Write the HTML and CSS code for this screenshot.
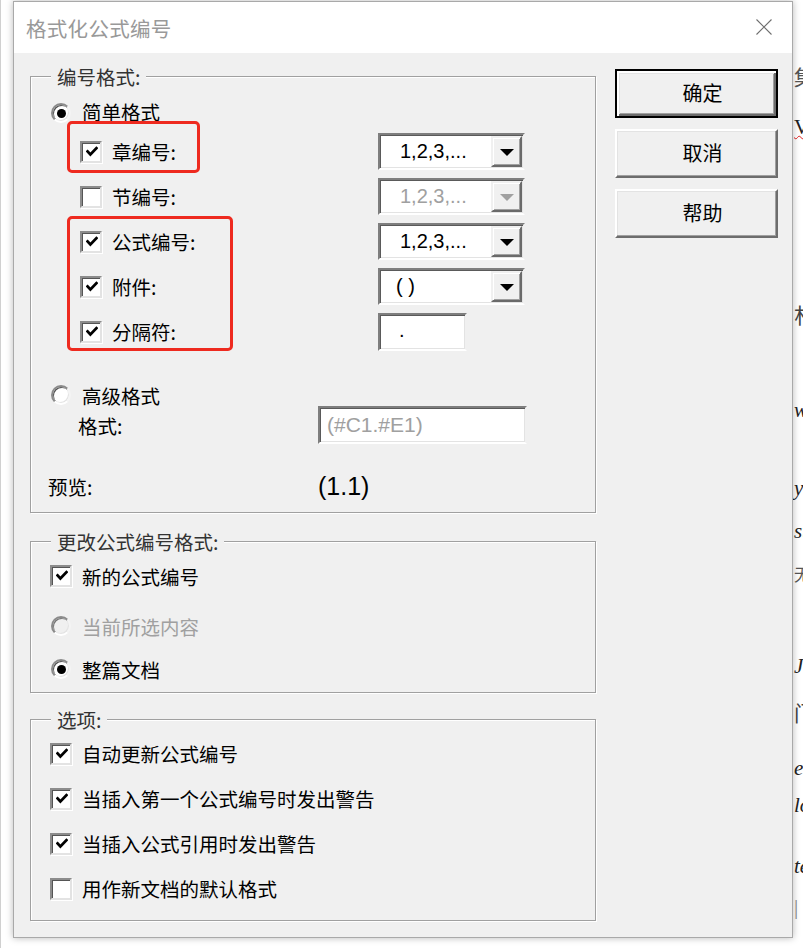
FILE: index.html
```html
<!DOCTYPE html>
<html lang="zh-CN">
<head>
<meta charset="utf-8">
<title>格式化公式编号</title>
<link rel="stylesheet" href="styles.css">
</head>
<body>
<div class="screen">
  <div class="left-strip"></div>
  <div class="dialog">
    <div class="titlebar">
      <span class="title">格式化公式编号</span>
      <svg class="close" width="16" height="16" viewBox="0 0 16 16"><path d="M0.5 0.5 L15.5 15.5 M15.5 0.5 L0.5 15.5" stroke="#6e6e6e" stroke-width="1.1" fill="none"/></svg>
    </div>
    <div class="body">
      <div class="groups">
        <div class="group g1">
          <span class="legend">编号格式:</span>
          <div class="row r-simple">
            <span class="mark"><span class="radio on"></span></span>
            <span class="label">简单格式</span>
          </div>
          <div class="row crow">
            <span class="check on"><svg viewBox="0 0 12 12"><path d="M1.6 5.4 L4.4 8.4 L10.4 2.2" stroke="#000" stroke-width="2.8" fill="none" stroke-linecap="square"/></svg></span>
            <span class="label clabel">章编号:</span>
            <span class="combo"><span class="ctext">1,2,3,...</span><span class="cbtn"><span class="arrow"></span></span></span>
          </div>
          <div class="row crow">
            <span class="check"></span>
            <span class="label clabel">节编号:</span>
            <span class="combo disabled"><span class="ctext">1,2,3,...</span><span class="cbtn"><span class="arrow"></span></span></span>
          </div>
          <div class="row crow">
            <span class="check on"><svg viewBox="0 0 12 12"><path d="M1.6 5.4 L4.4 8.4 L10.4 2.2" stroke="#000" stroke-width="2.8" fill="none" stroke-linecap="square"/></svg></span>
            <span class="label clabel">公式编号:</span>
            <span class="combo"><span class="ctext">1,2,3,...</span><span class="cbtn"><span class="arrow"></span></span></span>
          </div>
          <div class="row crow">
            <span class="check on"><svg viewBox="0 0 12 12"><path d="M1.6 5.4 L4.4 8.4 L10.4 2.2" stroke="#000" stroke-width="2.8" fill="none" stroke-linecap="square"/></svg></span>
            <span class="label clabel">附件:</span>
            <span class="combo"><span class="ctext paren">( )</span><span class="cbtn"><span class="arrow"></span></span></span>
          </div>
          <div class="row crow">
            <span class="check on"><svg viewBox="0 0 12 12"><path d="M1.6 5.4 L4.4 8.4 L10.4 2.2" stroke="#000" stroke-width="2.8" fill="none" stroke-linecap="square"/></svg></span>
            <span class="label clabel">分隔符:</span>
            <span class="field sep">.</span>
          </div>
          <div class="row r-adv">
            <span class="mark"><span class="radio"></span></span>
            <span class="label">高级格式</span>
          </div>
          <div class="row r-fmt">
            <span class="label fmt-label">格式:</span>
            <span class="field adv">(#C1.#E1)</span>
          </div>
          <div class="row r-preview">
            <span class="label pv-label">预览:</span>
            <span class="preview">(1.1)</span>
          </div>
          <span class="redbox rb1"></span>
          <span class="redbox rb2"></span>
        </div>

        <div class="group g2">
          <span class="legend">更改公式编号格式:</span>
          <div class="row r2a">
            <span class="check on"><svg viewBox="0 0 12 12"><path d="M1.6 5.4 L4.4 8.4 L10.4 2.2" stroke="#000" stroke-width="2.8" fill="none" stroke-linecap="square"/></svg></span>
            <span class="label">新的公式编号</span>
          </div>
          <div class="row r2b">
            <span class="mark"><span class="radio dis"></span></span>
            <span class="label gray">当前所选内容</span>
          </div>
          <div class="row r2c">
            <span class="mark"><span class="radio on"></span></span>
            <span class="label">整篇文档</span>
          </div>
        </div>

        <div class="group g3">
          <span class="legend">选项:</span>
          <div class="row orow">
            <span class="check on"><svg viewBox="0 0 12 12"><path d="M1.6 5.4 L4.4 8.4 L10.4 2.2" stroke="#000" stroke-width="2.8" fill="none" stroke-linecap="square"/></svg></span>
            <span class="label">自动更新公式编号</span>
          </div>
          <div class="row orow">
            <span class="check on"><svg viewBox="0 0 12 12"><path d="M1.6 5.4 L4.4 8.4 L10.4 2.2" stroke="#000" stroke-width="2.8" fill="none" stroke-linecap="square"/></svg></span>
            <span class="label">当插入第一个公式编号时发出警告</span>
          </div>
          <div class="row orow">
            <span class="check on"><svg viewBox="0 0 12 12"><path d="M1.6 5.4 L4.4 8.4 L10.4 2.2" stroke="#000" stroke-width="2.8" fill="none" stroke-linecap="square"/></svg></span>
            <span class="label">当插入公式引用时发出警告</span>
          </div>
          <div class="row orow">
            <span class="check"></span>
            <span class="label">用作新文档的默认格式</span>
          </div>
        </div>
      </div>

      <div class="buttons">
        <button class="btn default"><span class="btn-inner">确定</span></button>
        <button class="btn"><span class="btn-inner">取消</span></button>
        <button class="btn"><span class="btn-inner">帮助</span></button>
      </div>
    </div>
  </div>
  <div class="doc">
    <div class="dl">集</div>
    <div class="dl squig">V</div>
    <div class="dl">朴</div>
    <div class="dl it">w</div>
    <div class="dl it">y</div>
    <div class="dl it">st</div>
    <div class="dl">无</div>
    <div class="dl it">J</div>
    <div class="dl">门</div>
    <div class="dl it">e</div>
    <div class="dl it">lo</div>
    <div class="dl it">te</div>
    <div class="dl bar">|</div>
  </div>
</div>
</body>
</html>
```

FILE: styles.css
```css
* { box-sizing: border-box; }
html, body { margin: 0; padding: 0; background: #fff; }
body {
  font-family: "Noto Sans CJK SC", "Liberation Sans", sans-serif;
  color: #000;
  overflow: hidden;
}
.screen {
  display: flex;
  width: 803px;
  height: 948px;
  overflow: hidden;
  border-left: 1px solid #d0d0d0;
}
.left-strip { width: 12px; flex: none; }

.dialog {
  flex: none;
  width: 780px;
  height: 937px;
  margin-top: 1px;
  border: 1px solid #a9a9a9;
  background: #f0f0f0;
  box-shadow: 0 0 7px rgba(0,0,0,0.28);
  position: relative;
  z-index: 1;
  display: flex;
  flex-direction: column;
}
.titlebar {
  height: 51px;
  flex: none;
  background: #fff;
  display: flex;
  align-items: center;
  justify-content: space-between;
  padding: 0 20px 0 12px;
}
.title {
  font-size: 20.5px;
  color: #999;
  letter-spacing: 0.3px;
}
.close { display: block; margin-top: -1px; }

.body {
  display: flex;
  flex: 1;
  padding: 23px 0 0 16px;
}
.groups { width: 566px; flex: none; }

.group {
  position: relative;
  border: 1px solid #a0a0a0;
  box-shadow: inset 1px 1px 0 #fff, 1px 1px 0 #fff;
}
.g1 { height: 437px; padding: 20px 0 0 19px; }
.g2 { height: 152px; margin-top: 28px; padding: 14px 0 0 19px; }
.g3 { height: 202px; margin-top: 26px; padding: 11px 0 0 19px; }

.legend {
  position: absolute;
  top: -13px;
  left: 20px;
  padding: 0 6px;
  background: #f0f0f0;
  font-size: 19.5px;
  line-height: 26px;
  color: #333;
}

.row {
  display: flex;
  align-items: center;
  font-size: 19.5px;
}
.label { white-space: nowrap; }
.gray { color: #a0a0a0; }

.mark {
  width: 22px;
  height: 22px;
  flex: none;
  display: flex;
  align-items: center;
  justify-content: center;
  margin-right: 10px;
}
.radio {
  width: 20px;
  height: 20px;
  border-radius: 50%;
  border: 2px solid;
  border-color: #8a8a8a #f4f4f4 #ffffff #8a8a8a;
  background: #fff;
  box-shadow: inset 1px 1px 0 #555, inset -1px -1px 0 #e3e3e3;
  position: relative;
}
.radio.dis {
  box-shadow: inset 1px 1px 0 #777, inset -1px -1px 0 #e3e3e3;
  background: #f0f0f0;
}
.radio.on::after {
  content: "";
  position: absolute;
  left: 3.5px;
  top: 3.5px;
  width: 9px;
  height: 9px;
  border-radius: 50%;
  background: #000;
}

.check {
  width: 22px;
  height: 22px;
  flex: none;
  border: 2px solid;
  border-color: #8c8c8c #e3e3e3 #e3e3e3 #8c8c8c;
  box-shadow: inset 1px 1px 0 #555, 1px 1px 0 #fff;
  background: #fff;
  margin-right: 10px;
  display: flex;
  align-items: center;
  justify-content: center;
}
.check svg { width: 12px; height: 12px; display: block; margin: 0 0 0 1px; }

/* group 1 rows */
.r-simple { height: 32px; }
.r-simple .label { margin-top: -3px; }
.crow { height: 45px; margin-left: 30px; }
.clabel { width: 266px; }
.r-adv { height: 30px; margin-top: 26px; }
.r-fmt { height: 30px; }
.fmt-label { width: 240px; margin-left: 28px; }
.r-preview { height: 30px; margin-top: 31px; }
.pv-label { width: 270px; margin-left: -2px; }
.preview {
  font-family: "Liberation Sans", sans-serif;
  font-size: 25px;
}

.combo {
  width: 147px;
  height: 37px;
  flex: none;
  display: flex;
  align-items: center;
  justify-content: space-between;
  border: 2px solid;
  border-color: #7e7e7e #f0f0f0 #fff #7e7e7e;
  box-shadow: inset 1px 1px 0 #5a5a5a, inset -1px -1px 0 #e3e3e3;
  background: #fff;
  padding: 1px;
}
.ctext {
  font-family: "Liberation Sans", sans-serif;
  font-size: 20px;
  padding-left: 19px;
  padding-bottom: 1px;
}
.ctext.paren { padding-left: 15px; }
.cbtn {
  width: 31px;
  height: 31px;
  background: #f0f0f0;
  border: 2px solid;
  border-color: #f0f0f0 #6a6a6a #6a6a6a #f0f0f0;
  box-shadow: inset 1px 1px 0 #fff, inset -1px -1px 0 #a0a0a0;
  display: flex;
  align-items: center;
  justify-content: center;
}
.arrow {
  width: 0;
  height: 0;
  border-left: 7.5px solid transparent;
  border-right: 7.5px solid transparent;
  border-top: 7.5px solid #000;
  margin-top: 1px;
}
.combo.disabled .ctext { color: #a0a0a0; }
.combo.disabled .arrow { border-top-color: #a0a0a0; }

.field {
  height: 38px;
  flex: none;
  display: flex;
  align-items: center;
  border: 2px solid;
  border-color: #7e7e7e #f0f0f0 #fff #7e7e7e;
  box-shadow: inset 1px 1px 0 #5a5a5a, inset -1px -1px 0 #e3e3e3;
  background: #fff;
  font-family: "Liberation Sans", sans-serif;
}
.field.sep { width: 89px; font-size: 20px; padding-left: 19px; padding-bottom: 2px; }
.field.adv { width: 209px; font-size: 21px; padding-left: 7px; color: #a0a0a0; }

.redbox {
  position: absolute;
  border: 3px solid #ee2a1f;
  border-radius: 5px;
  pointer-events: none;
}
.rb1 { left: 36px; top: 44px; width: 133px; height: 52px; }
.rb2 { left: 36px; top: 139px; width: 166px; height: 135px; }

/* group 2 rows */
.r2a { height: 40px; }
.r2b { height: 40px; margin-top: 10px; }
.r2c { height: 40px; margin-top: 3px; }

/* group 3 rows */
.orow { height: 45px; }

/* buttons */
.buttons {
  margin-left: 19px;
  margin-top: -7px;
  display: flex;
  flex-direction: column;
  gap: 11px;
}
.btn {
  width: 163px;
  height: 49px;
  padding: 0 0 0 12px;
  margin: 0;
  background: #f0f0f0;
  border: 2px solid;
  border-color: #fff #6d6d6d #6d6d6d #fff;
  box-shadow: inset -1px -1px 0 #a0a0a0, inset 1px 1px 0 #e3e3e3;
  font-family: "Noto Sans CJK SC", sans-serif;
  font-size: 20px;
  color: #000;
  display: flex;
  align-items: center;
  justify-content: center;
}
.btn-inner { display: block; padding-bottom: 2px; }
.btn.default {
  border: 2px solid #000;
  box-shadow: inset 2px 2px 0 #fff, inset -2px -2px 0 #6d6d6d, inset 3px 3px 0 #e3e3e3, inset -3px -3px 0 #a0a0a0;
}

/* background document (behind the dialog, right edge) */
.doc {
  flex: 1;
  display: flex;
  flex-direction: column;
  overflow: hidden;
  padding-left: 1px;
  font-family: "Liberation Serif", "Noto Sans CJK SC", serif;
  font-size: 21px;
  line-height: 24px;
  color: #222;
  white-space: nowrap;
}
.dl { height: 24px; flex: none; }
.it { font-style: italic; }
.dl:nth-child(1) { margin-top: 66px; color: #555; }
.dl:nth-child(2) { margin-top: 25px; }
.squig { text-decoration: underline wavy #e02020; text-decoration-thickness: 1px; }
.dl:nth-child(3) { margin-top: 165px; color: #444; }
.dl:nth-child(4) { margin-top: 70px; }
.dl:nth-child(5) { margin-top: 54px; }
.dl:nth-child(6) { margin-top: 19px; }
.dl:nth-child(7) { margin-top: 21px; color: #555; font-size: 17px; }
.dl:nth-child(8) { margin-top: 66px; }
.dl:nth-child(9) { margin-top: 24px; color: #444; }
.dl:nth-child(10) { margin-top: 30px; }
.dl:nth-child(11) { margin-top: 13px; }
.dl:nth-child(12) { margin-top: 37px; }
.dl:nth-child(13) { margin-top: 17px; color: #888; }
```
